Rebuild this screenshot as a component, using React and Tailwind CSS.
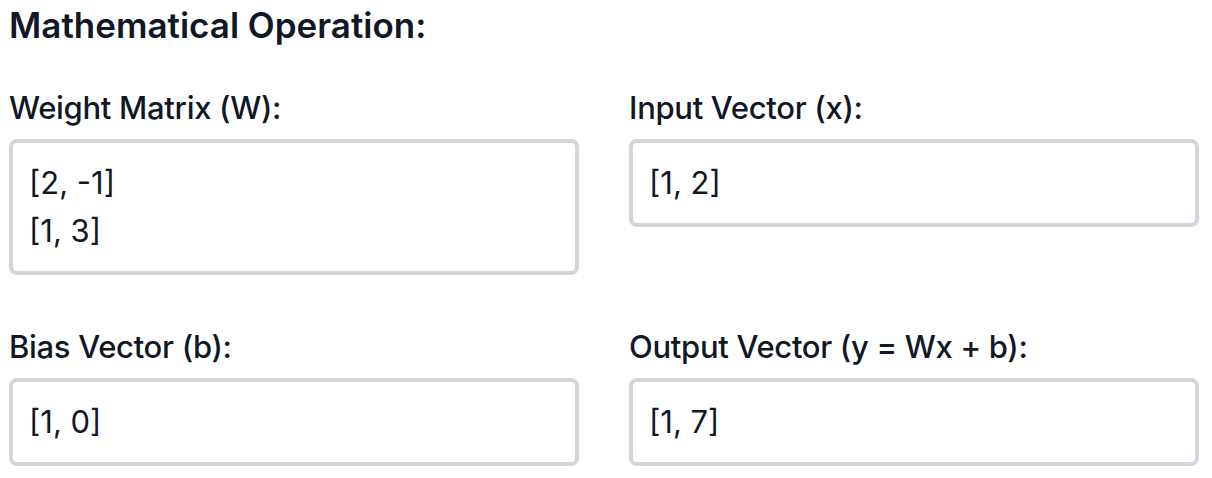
import React from 'react';

const W = [[2, -1], [1, 3]];
const x = [1, 2];
const b = [1, 0];

// y = Wx + b
const y = W.map((row, i) => row.reduce((s, w, j) => s + w * x[j], 0) + b[i]);

function Field({ label, lines }) {
  return (
    <div className="flex flex-col">
      <div className="text-[31px] leading-[48px] font-medium tracking-[-0.01em] text-gray-900 mb-[7px]">{label}</div>
      <div className="border-4 border-gray-300 rounded-lg p-4 text-[31px] leading-[48px] text-gray-900 bg-white">
        {lines.map((l, i) => (
          <div key={i}>{l}</div>
        ))}
      </div>
    </div>
  );
}

export default function App() {
  const fmt = v => `[${v.join(', ')}]`;

  return (
    <div className="bg-white min-h-screen pl-[9px] w-[1199px]" style={{ fontFamily: 'Inter, "Noto Sans", sans-serif' }}>
      <h2 className="text-[35px] leading-[50px] font-semibold text-gray-900 mb-[34px]">Mathematical Operation:</h2>
      <div className="grid grid-cols-2 gap-x-[50px] gap-y-[48px] items-start">
        <Field label="Weight Matrix (W):" lines={W.map(fmt)} />
        <Field label="Input Vector (x):" lines={[fmt(x)]} />
        <Field label="Bias Vector (b):" lines={[fmt(b)]} />
        <Field label="Output Vector (y = Wx + b):" lines={[fmt(y)]} />
      </div>
    </div>
  );
}
